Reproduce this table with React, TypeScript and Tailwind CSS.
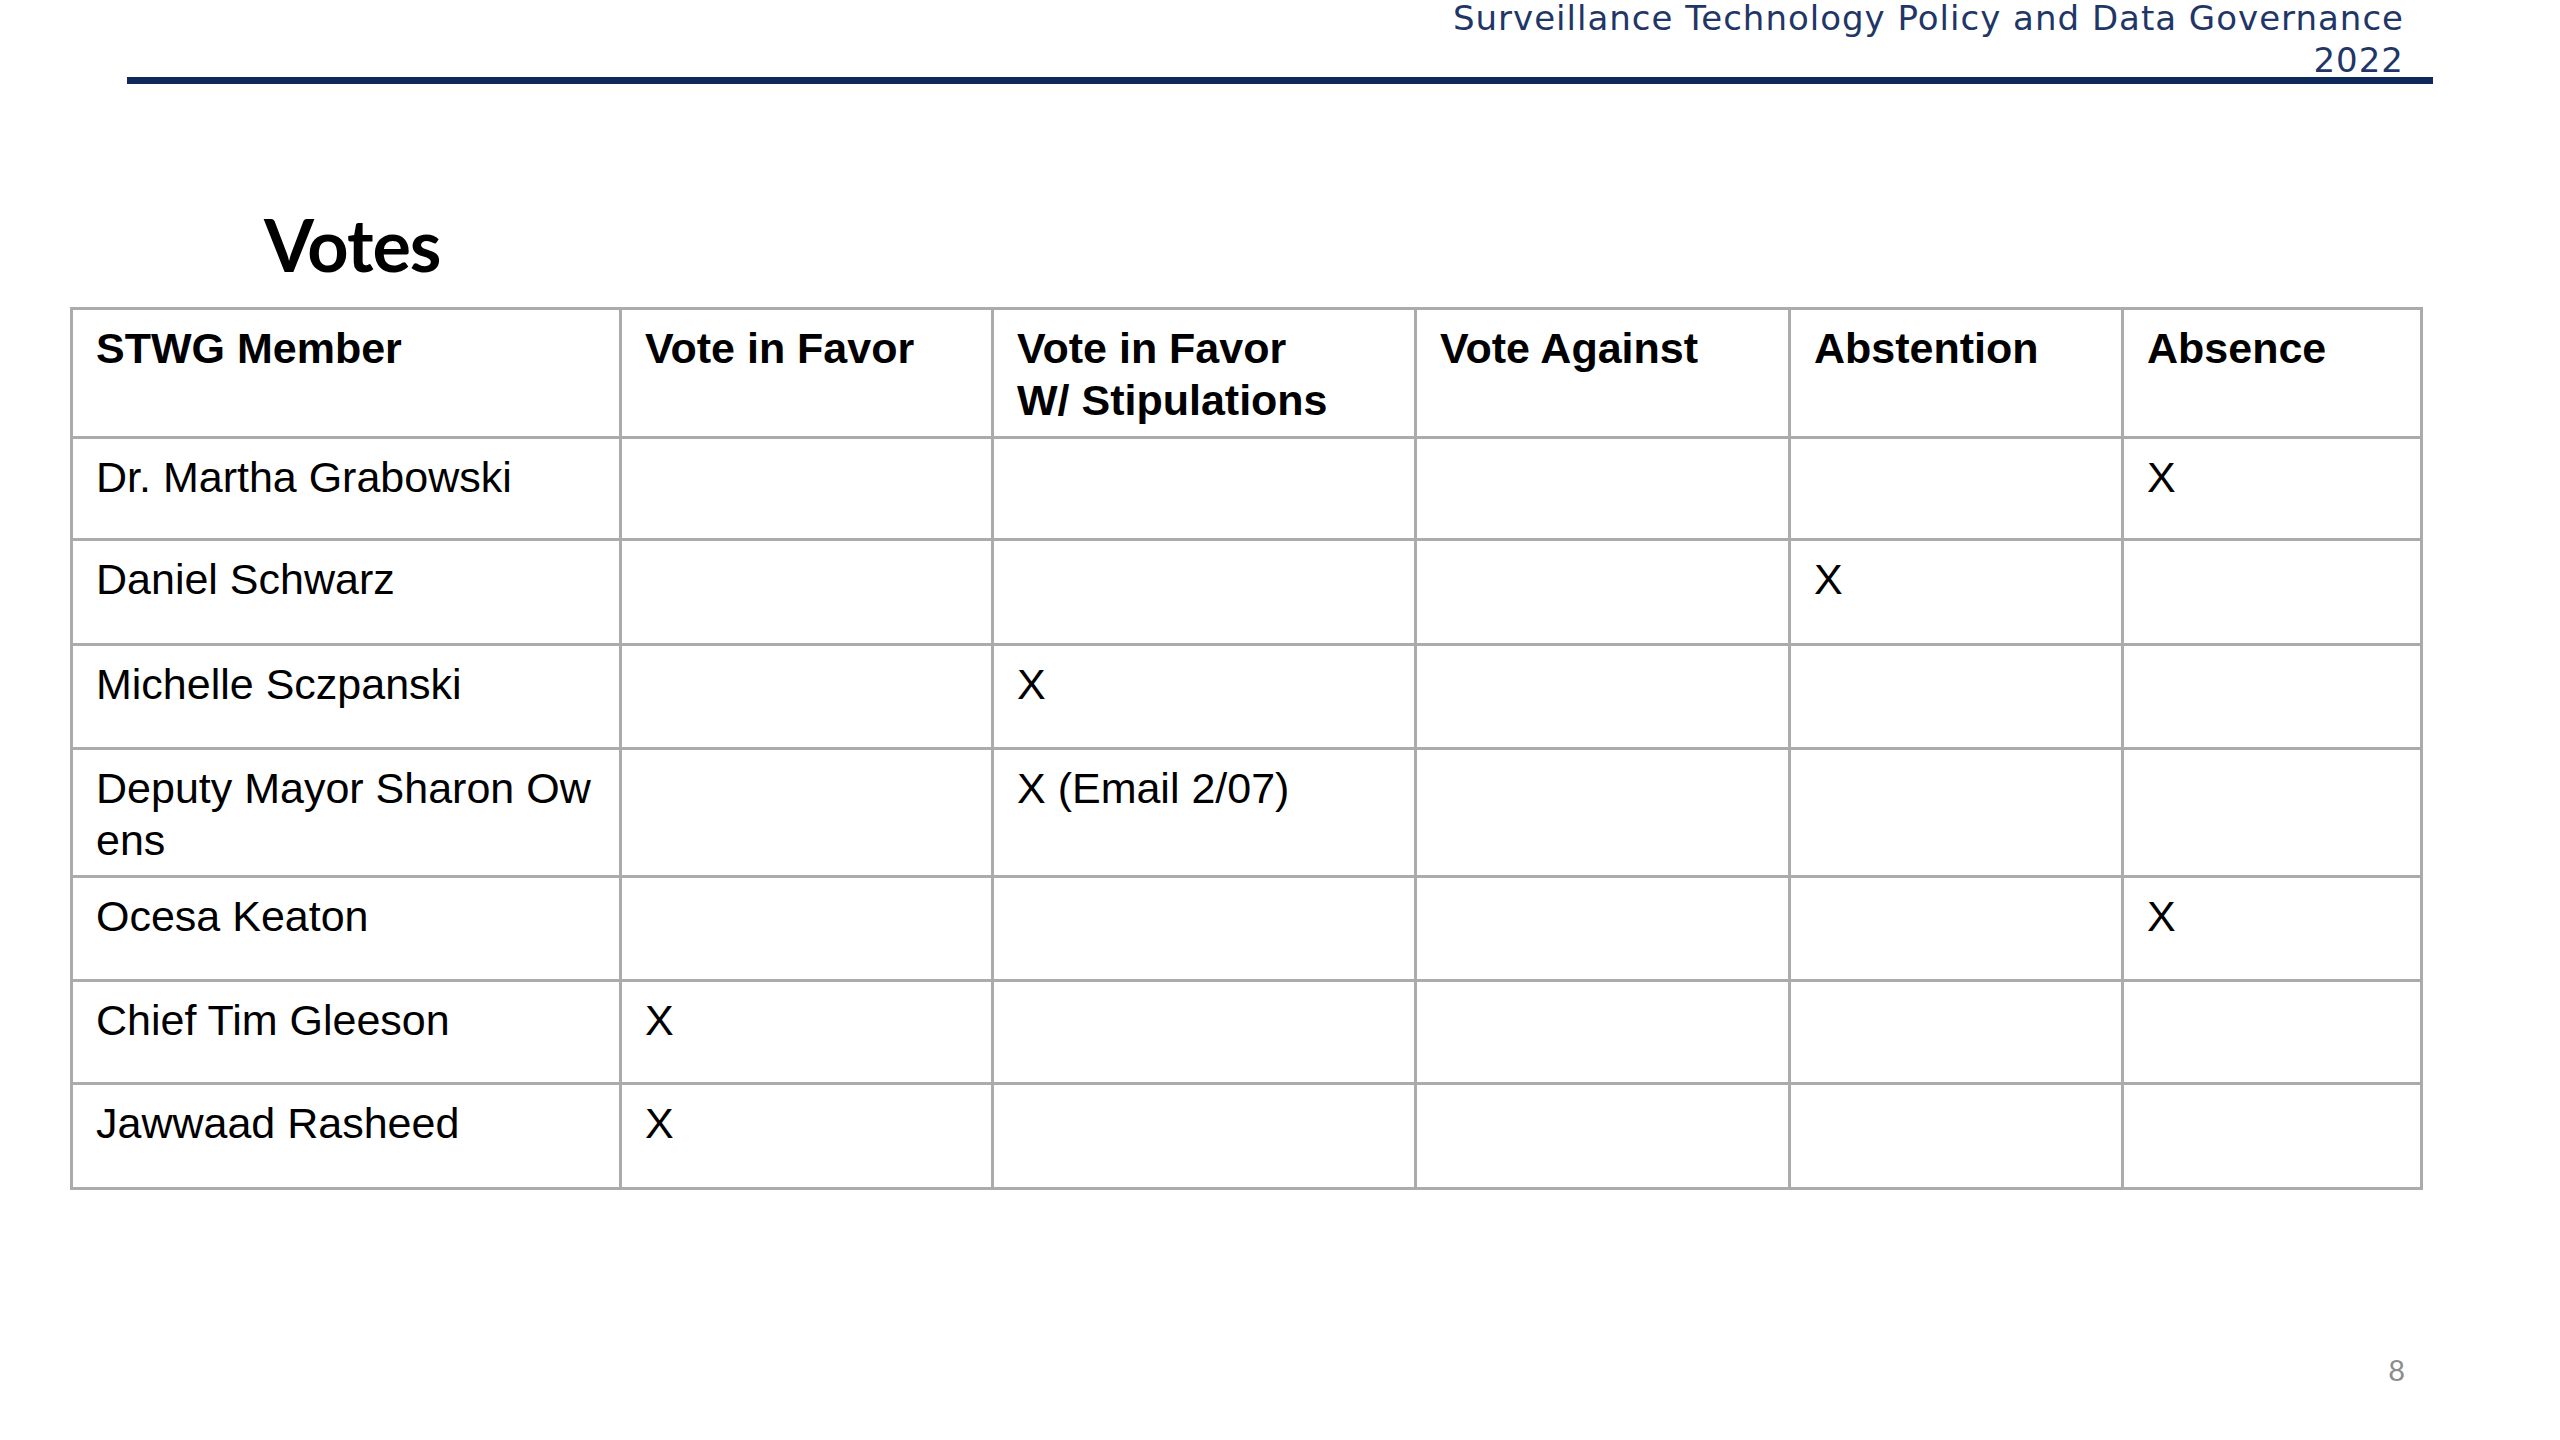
import React from 'react';

type Row = { name: string; marks: string[] };

const columns = [
  'STWG Member',
  'Vote in Favor',
  'Vote in Favor\nW/ Stipulations',
  'Vote Against',
  'Abstention',
  'Absence',
];

const colWidths = ['w-[549px]', 'w-[372px]', 'w-[423px]', 'w-[374px]', 'w-[333px]', 'w-[299px]'];

const rows: Row[] = [
  { name: 'Dr. Martha Grabowski', marks: ['', '', '', '', 'X'] },
  { name: 'Daniel Schwarz', marks: ['', '', '', 'X', ''] },
  { name: 'Michelle Sczpanski', marks: ['', 'X', '', '', ''] },
  { name: 'Deputy Mayor Sharon Ow\nens', marks: ['', 'X (Email 2/07)', '', '', ''] },
  { name: 'Ocesa Keaton', marks: ['', '', '', '', 'X'] },
  { name: 'Chief Tim Gleeson', marks: ['X', '', '', '', ''] },
  { name: 'Jawwaad Rasheed', marks: ['X', '', '', '', ''] },
];

const rowHeights = ['h-[102px]', 'h-[105px]', 'h-[104px]', 'h-[128px]', 'h-[104px]', 'h-[103px]', 'h-[105px]'];

export default function App() {
  return (
    <div className="w-[2560px] h-[1440px] bg-white overflow-hidden flex flex-col">
      {/* Header */}
      <div className="px-[127px]">
        <div className="h-[77px] pr-[29px] text-right text-[34px] tracking-[1px] text-[#1f3667] font-['DejaVu_Sans',sans-serif]">
          <p className="leading-[36px]">Surveillance Technology Policy and Data Governance</p>
          <p className="mt-[7px] leading-[34px]">2022</p>
        </div>
        <div className="h-[7px] bg-[#0f2a5a]" />
      </div>

      {/* Title */}
      <h1 className="mt-[124px] pl-[264px] text-[72px] leading-[72px] font-bold tracking-[-1px] text-black font-['Lato',sans-serif]">
        Votes
      </h1>

      {/* Table */}
      <div className="mt-[27px] pl-[70px]">
        <table className="table-fixed border-collapse w-[2350px] font-['Liberation_Sans',Arial,sans-serif] text-[43px] leading-[52px] text-black">
          <colgroup>
            {colWidths.map((w, i) => (
              <col key={i} className={w} />
            ))}
          </colgroup>
          <thead>
            <tr className="h-[129px]">
              {columns.map((c) => (
                <th
                  key={c}
                  className="border-[3px] border-[#ababab] align-top text-left font-bold pl-[23px] pt-[12px] whitespace-pre-line"
                >
                  {c}
                </th>
              ))}
            </tr>
          </thead>
          <tbody>
            {rows.map((r, i) => (
              <tr key={r.name} className={rowHeights[i]}>
                <td className="border-[3px] border-[#ababab] align-top pl-[23px] pt-[12px] whitespace-pre-line">
                  {r.name}
                </td>
                {r.marks.map((m, j) => (
                  <td key={j} className="border-[3px] border-[#ababab] align-top pl-[23px] pt-[12px]">
                    {m}
                  </td>
                ))}
              </tr>
            ))}
          </tbody>
        </table>
      </div>

      {/* Page number */}
      <div className="mt-[165px] flex justify-end pr-[155px]">
        <span className="text-[29px] leading-[29px] text-[#8c8c8c] font-['Lato',sans-serif]">8</span>
      </div>
    </div>
  );
}
